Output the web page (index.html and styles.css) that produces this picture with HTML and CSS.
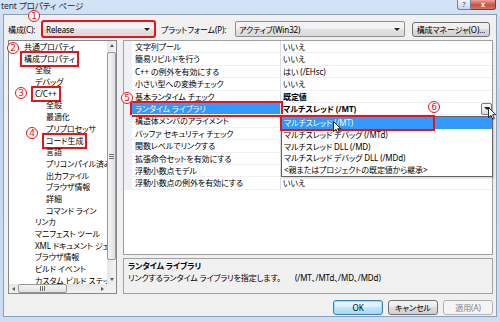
FILE: index.html
```html
<!DOCTYPE html>
<html lang="ja">
<head>
  <meta charset="UTF-8">
  <meta name="viewport" content="width=device-width, initial-scale=1.0">
  <title>tent プロパティ ページ</title>
  <link rel="stylesheet" href="styles.css">
</head>
<body>
  <div id="window">
    <div class="titlebar">
      <span class="title">tent プロパティ ページ</span>
      <div class="caption">
        <span class="cap-help">?</span>
        <span class="cap-close">x</span>
      </div>
    </div>

    <div class="client">
      <div class="toolbar">
        <label class="lbl-config">構成(C):</label>
        <div class="combo combo-config marked"><span>Release</span><i class="arrow"></i></div>
        <label class="lbl-platform">プラットフォーム(P):</label>
        <div class="combo combo-platform"><span>アクティブ(Win32)</span><i class="arrow"></i></div>
        <button class="btn btn-manager">構成マネージャ(O)...</button>
      </div>

      <div class="main">
        <!-- tree on the left -->
        <div class="tree">
          <ul class="tree-list">
            <li class="lv1">共通プロパティ</li>
            <li class="lv1"><span class="marked">構成プロパティ</span></li>
            <li class="lv2">全般</li>
            <li class="lv2">デバッグ</li>
            <li class="lv2"><span class="marked">C/C++</span></li>
            <li class="lv3">全般</li>
            <li class="lv3">最適化</li>
            <li class="lv3">プリプロセッサ</li>
            <li class="lv3"><span class="marked">コード生成</span></li>
            <li class="lv3">言語</li>
            <li class="lv3">プリコンパイル済みヘッダー</li>
            <li class="lv3">出力ファイル</li>
            <li class="lv3">ブラウザ情報</li>
            <li class="lv3">詳細</li>
            <li class="lv3">コマンド ライン</li>
            <li class="lv2">リンカ</li>
            <li class="lv2">マニフェスト ツール</li>
            <li class="lv2">XML ドキュメント ジェネレーター</li>
            <li class="lv2">ブラウザ情報</li>
            <li class="lv2">ビルド イベント</li>
            <li class="lv2">カスタム ビルド ステップ</li>
          </ul>
          <div class="vscroll">
            <span class="sb-btn"><i class="tri-up"></i></span>
            <span class="thumb-v"><i class="grip-v"></i></span>
            <span class="sb-btn sb-end"><i class="tri-down"></i></span>
          </div>
          <div class="hscroll">
            <span class="sb-btn"><i class="tri-left"></i></span>
            <span class="thumb-h"><i class="grip-h"></i></span>
            <span class="sb-btn sb-end"><i class="tri-right"></i></span>
          </div>
          <div class="corner"></div>
        </div>

        <!-- property grid + description -->
        <div class="right">
          <div class="grid">
            <div class="row"><span class="gutter"></span><span class="name">文字列プール</span><span class="value">いいえ</span></div>
            <div class="row"><span class="gutter"></span><span class="name">簡易リビルドを行う</span><span class="value">いいえ</span></div>
            <div class="row"><span class="gutter"></span><span class="name">C++ の例外を有効にする</span><span class="value">はい (/EHsc)</span></div>
            <div class="row"><span class="gutter"></span><span class="name">小さい型への変換チェック</span><span class="value">いいえ</span></div>
            <div class="row"><span class="gutter"></span><span class="name">基本ランタイム チェック</span><span class="value bold">既定値</span></div>
            <div class="row selected"><span class="gutter"></span><span class="name">ランタイム ライブラリ</span><span class="value bold">マルチスレッド (/MT)<i class="dd-btn"><i class="arrow"></i></i></span></div>
            <div class="row"><span class="gutter"></span><span class="name">構造体メンバのアライメント</span><span class="value"></span></div>
            <div class="row"><span class="gutter"></span><span class="name">バッファ セキュリティ チェック</span><span class="value"></span></div>
            <div class="row"><span class="gutter"></span><span class="name">関数レベルでリンクする</span><span class="value"></span></div>
            <div class="row"><span class="gutter"></span><span class="name">拡張命令セットを有効にする</span><span class="value"></span></div>
            <div class="row"><span class="gutter"></span><span class="name">浮動小数点モデル</span><span class="value"></span></div>
            <div class="row"><span class="gutter"></span><span class="name">浮動小数点の例外を有効にする</span><span class="value">いいえ</span></div>

            <ul class="dropdown">
              <li class="active"><span>マルチスレッド (/MT)</span></li>
              <li><span>マルチスレッド デバッグ (/MTd)</span></li>
              <li><span>マルチスレッド DLL (/MD)</span></li>
              <li><span>マルチスレッド デバッグ DLL (/MDd)</span></li>
              <li><span>&lt;親またはプロジェクトの既定値から継承&gt;</span></li>
            </ul>
          </div>
          <div class="desc">
            <div class="desc-title">ランタイム ライブラリ</div>
            <div class="desc-text"><span class="desc-main">リンクするランタイム ライブラリを指定します。</span><span>(/MT、/MTd、/MD、/MDd)</span></div>
          </div>
        </div>
      </div>

      <div class="buttons">
        <button class="btn btn-ok">OK</button>
        <button class="btn">キャンセル</button>
        <button class="btn btn-apply" disabled>適用(A)</button>
      </div>
    </div>

    <!-- annotation numbers -->
    <span class="num n1">1</span>
    <span class="num n2">2</span>
    <span class="num n3">3</span>
    <span class="num n4">4</span>
    <span class="num n5">5</span>
    <span class="num n6">6</span>

    <!-- mouse pointers -->
    <svg class="cursor c1" width="9" height="13" viewBox="0 0 9 13"><path d="M0.5 0.5 L0.5 10.5 L3 8.3 L4.8 12.2 L6.3 11.5 L4.6 7.7 L7.8 7.7 Z" fill="#fff" stroke="#000" stroke-width="0.8"/></svg>
    <svg class="cursor c2" width="9" height="13" viewBox="0 0 9 13"><path d="M0.5 0.5 L0.5 10.5 L3 8.3 L4.8 12.2 L6.3 11.5 L4.6 7.7 L7.8 7.7 Z" fill="#fff" stroke="#000" stroke-width="0.8"/></svg>
  </div>
</body>
</html>
```

FILE: styles.css
```css
* {
  box-sizing: border-box;
}
body {
  margin: 0;
  width: 500px;
  height: 322px;
  overflow: hidden;
  font-family: "Noto Sans", "Noto Sans CJK JP", sans-serif;
  font-size: 8px;
  font-feature-settings: "palt" 1;
  letter-spacing: -0.1px;
  color: #000000;
}
#window {
  position: relative;
  width: 500px;
  height: 322px;
  padding: 0 3px;
  background: linear-gradient(#d3e2f4, #c3d6ee 30%, #cddef2);
}

/* title bar */
.titlebar {
  height: 14px;
  display: flex;
  align-items: flex-start;
  margin: 0 -3px;
  padding-left: 1px;
}
.title {
  font-size: 8.5px;
  line-height: 11px;
  color: #1e2a3a;
}
.caption {
  margin-left: auto;
  margin-right: 4px;
  display: flex;
}
.cap-help {
  width: 14px;
  height: 10px;
  border: 1px solid #6f8098;
  border-top: 0;
  border-radius: 0 0 0 3px;
  background: linear-gradient(#f1f5fb, #c8d6ea);
  color: #34465f;
  font-size: 7px;
  line-height: 9px;
  text-align: center;
}
.cap-close {
  width: 25px;
  height: 10px;
  border: 1px solid #7c3b33;
  border-top: 0;
  border-left: 0;
  border-radius: 0 0 3px 0;
  background: linear-gradient(#e9a698, #c8503f 55%, #d67363);
  color: #ffffff;
  font-size: 7px;
  font-weight: bold;
  line-height: 9px;
  text-align: center;
}

/* dialog body */
.client {
  height: 303px;
  background: #f0f0f0;
  border: 1px solid #8b9fb9;
  padding: 6px 3px 1px 4px;
  display: flex;
  flex-direction: column;
}
.toolbar {
  display: flex;
  align-items: center;
  height: 16px;
}
.lbl-config {
  width: 34px;
}
.lbl-platform {
  width: 74px;
  margin-left: 6px;
}
.combo {
  height: 16px;
  display: flex;
  align-items: center;
  padding: 0 4px 0 3px;
  border: 1px solid #8e8f8f;
  border-radius: 2px;
  background: linear-gradient(#f3f3f3 45%, #e3e3e3 50%, #d9d9d9);
}
.combo-config {
  width: 113px;
}
.combo-platform {
  width: 170px;
}
.arrow {
  margin-left: auto;
  border-left: 3px solid transparent;
  border-right: 3px solid transparent;
  border-top: 3px solid #222222;
}
.marked {
  outline: 2px solid #e8141b;
  outline-offset: -1px;
}

.btn {
  height: 15px;
  width: 50px;
  padding: 0;
  border: 1px solid #707070;
  border-radius: 3px;
  background: linear-gradient(#f2f2f2, #ebebeb 50%, #dddddd 50%, #cfcfcf);
  font: inherit;
  letter-spacing: inherit;
  color: #000000;
}
.btn-manager {
  width: 78px;
  margin-left: auto;
  margin-right: 3px;
}
.btn-ok {
  border-color: #3c7fb1;
  box-shadow: inset 0 0 0 1px #9bdcfa;
  background: linear-gradient(#eaf6fd, #d9f0fc 50%, #bee6fd 50%, #a7d9f5);
}
.btn-apply {
  border-color: #adb2b5;
  background: #f4f4f4;
  color: #838383;
}

.main {
  display: flex;
  gap: 6px;
  height: 254px;
  margin-top: 3px;
}

/* tree */
.tree {
  width: 109px;
  border: 1px solid #828790;
  background: #ffffff;
  display: grid;
  grid-template-columns: 1fr 9px;
  grid-template-rows: 1fr 9px;
  overflow: hidden;
}
.tree-list {
  margin: 0;
  padding: 0;
  list-style: none;
  overflow: hidden;
}
.tree-list li {
  line-height: 11.7px;
  height: 11.7px;
  white-space: nowrap;
}
.lv1 {
  padding-left: 15px;
}
.lv2 {
  padding-left: 26px;
}
.lv3 {
  padding-left: 37px;
}
.tree-list .marked {
  display: inline-block;
  line-height: 12px;
  padding: 0 2px;
  margin-left: -2px;
  outline-offset: 0;
}
.vscroll,
.hscroll {
  display: flex;
  background: linear-gradient(90deg, #e6e6e6, #f2f2f2);
}
.vscroll {
  flex-direction: column;
}
.hscroll {
  background: linear-gradient(#e6e6e6, #f2f2f2);
}
.sb-btn {
  width: 9px;
  height: 9px;
  display: flex;
  align-items: center;
  justify-content: center;
  flex: none;
}
.sb-end {
  margin-top: auto;
  margin-left: auto;
}
.hscroll .sb-end {
  margin-top: 0;
}
.tri-up {
  border: 2.5px solid transparent;
  border-bottom: 3px solid #5a5a5a;
  border-top: 0;
}
.tri-down {
  border: 2.5px solid transparent;
  border-top: 3px solid #5a5a5a;
  border-bottom: 0;
}
.tri-left {
  border: 2.5px solid transparent;
  border-right: 3px solid #5a5a5a;
  border-left: 0;
}
.tri-right {
  border: 2.5px solid transparent;
  border-left: 3px solid #5a5a5a;
  border-right: 0;
}
.thumb-v {
  height: 208px;
  margin: 2px 0 0 0;
  border: 1px solid #979797;
  border-radius: 2px;
  background: linear-gradient(90deg, #f4f4f4, #e2e2e2);
  display: flex;
  align-items: center;
  justify-content: center;
}
.grip-v {
  width: 5px;
  height: 5px;
  background: repeating-linear-gradient(#707070 0 1px, transparent 1px 2px);
}
.thumb-h {
  width: 49px;
  border: 1px solid #979797;
  border-radius: 2px;
  background: linear-gradient(#f4f4f4, #e2e2e2);
  display: flex;
  align-items: center;
  justify-content: center;
}
.grip-h {
  width: 5px;
  height: 5px;
  background: repeating-linear-gradient(90deg, #707070 0 1px, transparent 1px 2px);
}
.corner {
  background: #f0f0f0;
}

/* property grid */
.right {
  flex: 1;
  display: flex;
  flex-direction: column;
  gap: 3px;
}
.grid {
  position: relative;
  flex: 1;
  border: 1px solid #a0a0a0;
  background: #ffffff;
}
.row {
  display: flex;
  height: 12.4px;
  line-height: 12px;
}
.gutter {
  width: 8px;
  background: #eff1f7;
}
.name {
  width: 149px;
  padding-left: 3px;
  border-bottom: 1px solid #eef0f4;
  border-right: 1px solid #dcdcdc;
  white-space: nowrap;
}
.value {
  flex: 1;
  display: flex;
  padding-left: 2px;
  border-bottom: 1px solid #eef0f4;
  white-space: nowrap;
}
.bold {
  font-weight: bold;
}
.selected .name {
  background: #3399ff;
  color: #ffffff;
  outline: 2px solid #e8141b;
  outline-offset: 0;
}
.dd-btn {
  margin-left: auto;
  width: 11px;
  height: 12px;
  border: 1px solid #7a7a7a;
  border-radius: 2px;
  background: linear-gradient(#ffffff, #dcdcdc);
  display: flex;
  align-items: center;
  justify-content: center;
}
.dd-btn .arrow {
  margin: 0;
}
.dropdown {
  position: absolute;
  left: 157px;
  right: -1px;
  top: 75px;
  margin: 0;
  padding: 0;
  list-style: none;
  border: 1px solid #646464;
  background: #ffffff;
  box-shadow: 1px 1px 2px rgba(0, 0, 0, 0.2);
}
.dropdown li {
  height: 11.8px;
  line-height: 11.8px;
  white-space: nowrap;
}
.dropdown span {
  padding-left: 2px;
}
.dropdown .active {
  background: #3399ff;
  color: #ffffff;
}
.dropdown .active span {
  display: inline-block;
  width: 151px;
  height: 12px;
  outline: 2px solid #e8141b;
  outline-offset: 0;
}

/* description panel */
.desc {
  height: 36px;
  border: 1px solid #a0a0a0;
  background: #f0f0f0;
  padding: 1px 4px;
  line-height: 12px;
}
.desc-title {
  font-weight: bold;
}
.desc-text {
  white-space: nowrap;
}
.desc-main {
  display: inline-block;
  width: 167px;
}

.buttons {
  display: flex;
  justify-content: flex-end;
  gap: 5px;
  margin-top: 6px;
}

/* red circled step numbers */
.num {
  position: absolute;
  width: 12px;
  height: 12px;
  border: 1px solid #e8141b;
  border-radius: 50%;
  background: #ffffff;
  color: #e8141b;
  font-family: "DejaVu Sans", sans-serif;
  font-size: 9px;
  line-height: 10px;
  letter-spacing: 0;
  text-align: center;
}
.n1 { left: 28px; top: 10px; }
.n2 { left: 7px; top: 42px; }
.n3 { left: 15px; top: 87px; }
.n4 { left: 26px; top: 127px; }
.n5 { left: 121px; top: 92px; }
.n6 { left: 428px; top: 101px; }

.cursor {
  position: absolute;
}
.c1 { left: 488px; top: 107px; }
.c2 { left: 333px; top: 121px; }
```
